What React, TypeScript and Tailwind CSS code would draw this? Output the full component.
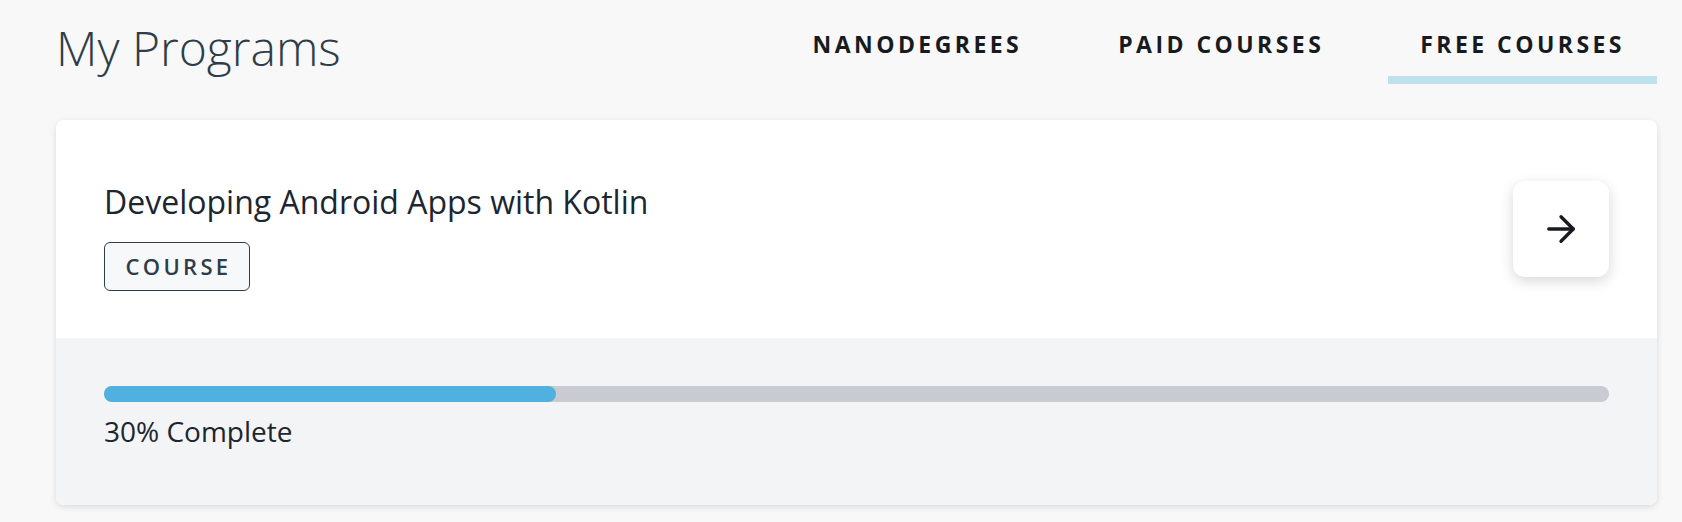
import { ArrowRight } from 'lucide-react';

const tabs = ['Nanodegrees', 'Paid Courses', 'Free Courses'];

function Tabs({ active }: { active: string }) {
  return (
    <nav className="flex gap-[32px] pt-[28px]">
      {tabs.map((t) => (
        <button
          key={t}
          className={
            'px-[32px] pb-[16px] border-b-[8px] text-[23px] leading-[32px] font-bold uppercase tracking-[0.15em] text-[#171b20] ' +
            (t === active ? 'border-[#bfe1eb]' : 'border-transparent')
          }
        >
          {t}
        </button>
      ))}
    </nav>
  );
}

function ProgramCard({ title, kind, progress }: { title: string; kind: string; progress: number }) {
  return (
    <div className="rounded-[8px] bg-white shadow-[0_2px_6px_rgba(0,0,0,0.12)] overflow-hidden">
      {/* Title + badge */}
      <div className="h-[218px] px-[48px] flex items-center justify-between">
        <div className="flex flex-col items-start pt-[12px]">
          <h2 className="text-[32px] leading-[44px] text-[#1c262f]">{title}</h2>
          <span className="mt-[18px] h-[49px] w-[146px] flex items-center justify-center rounded-[6px] border border-[#2e3d49] bg-[#f7f8f9] text-[22px] font-semibold uppercase tracking-[0.15em] pl-[3px] text-[#2e3d49]">
            {kind}
          </span>
        </div>
        <button className="w-[96px] h-[96px] rounded-[12px] bg-white shadow-[0_4px_14px_rgba(0,0,0,0.16)] flex items-center justify-center text-[#171b20]">
          <ArrowRight size={42} strokeWidth={1.9} />
        </button>
      </div>

      {/* Progress */}
      <div className="h-[167px] bg-[#f3f4f6] px-[48px] pt-[48px]">
        <div className="h-[16px] rounded-full bg-[#c8cbd1]">
          <div className="h-full rounded-full bg-[#50b0e0]" style={{ width: `${progress}%` }} />
        </div>
        <p className="mt-[10px] text-[28px] leading-[38px] text-[#1c262f]">{progress}% Complete</p>
      </div>
    </div>
  );
}

export default function App() {
  return (
    <div className="min-h-screen bg-[#f8f8f8] pl-[56px] pr-[25px] font-['Open_Sans',sans-serif]">
      <header className="h-[120px] flex items-start justify-between">
        <h1 className="pt-[15px] text-[48px] leading-[65px] font-light text-[#2e3d49]">My Programs</h1>
        <Tabs active="Free Courses" />
      </header>

      <ProgramCard title="Developing Android Apps with Kotlin" kind="Course" progress={30} />
    </div>
  );
}
